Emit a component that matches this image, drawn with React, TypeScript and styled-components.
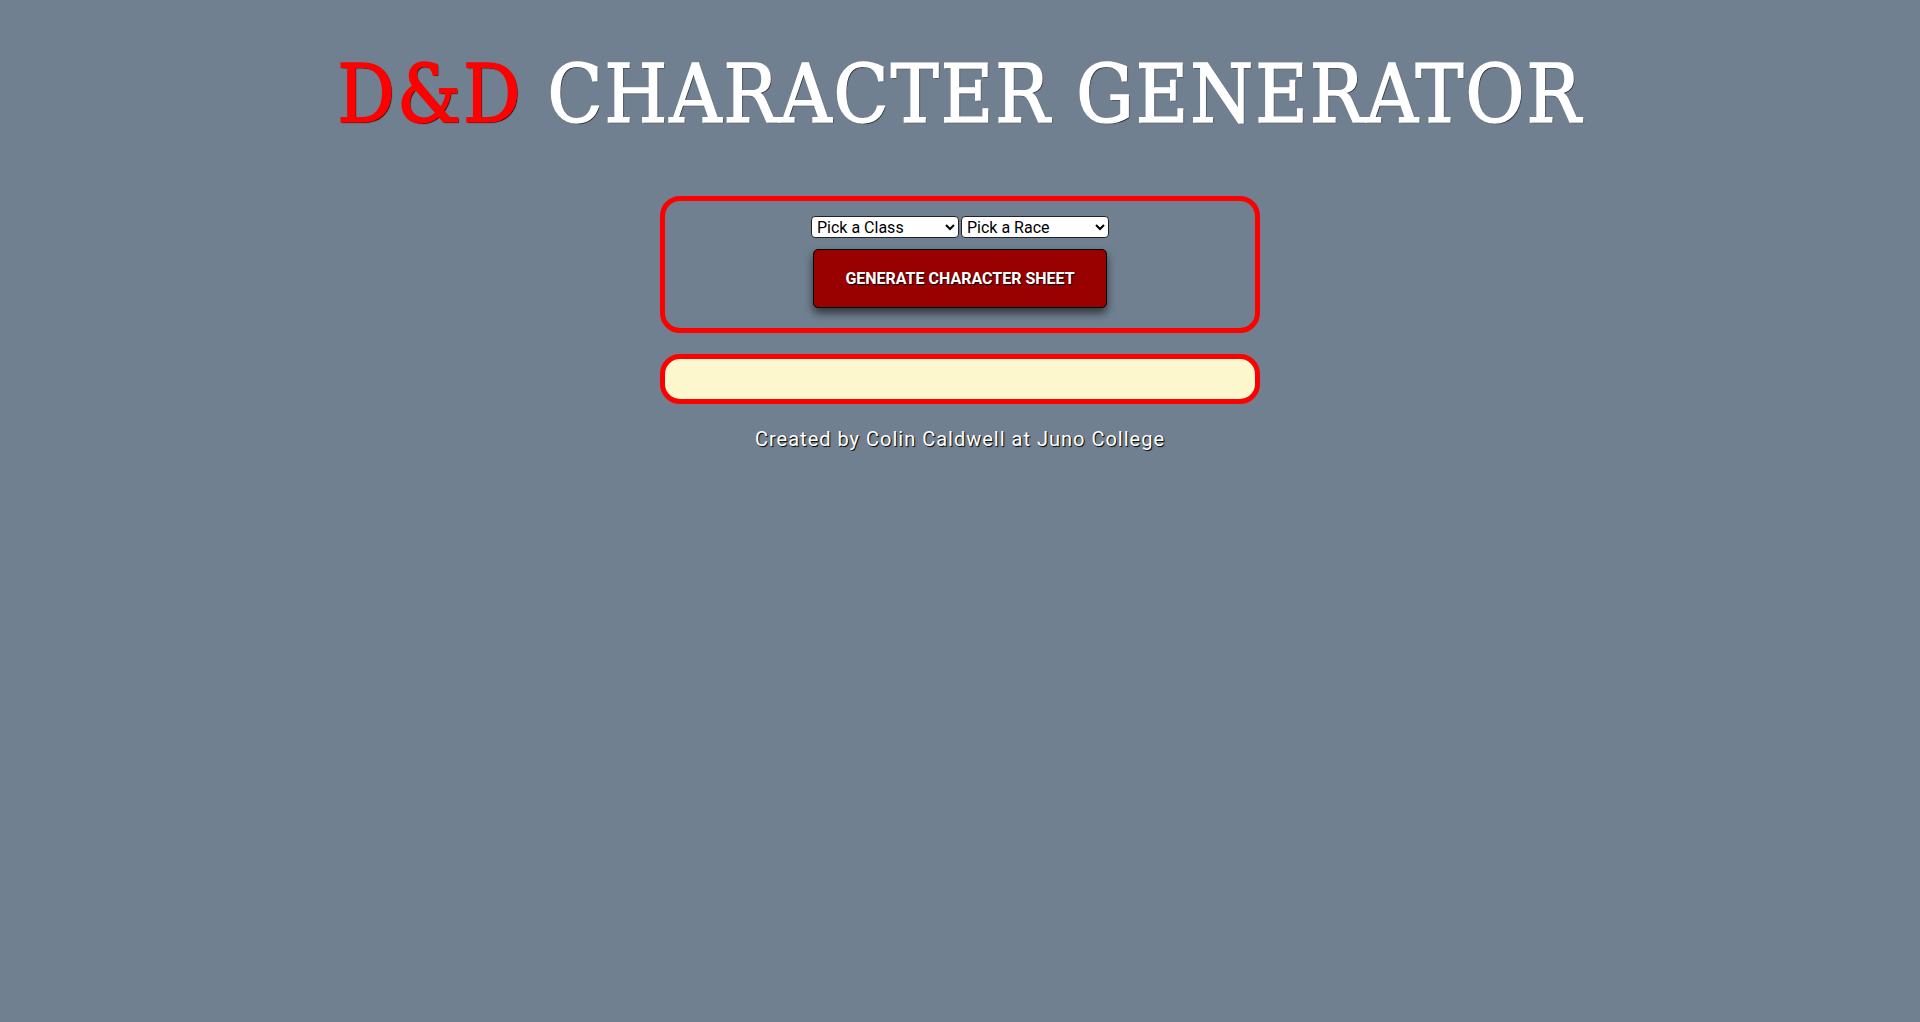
import React, { useState } from "react";
import styled, { createGlobalStyle } from "styled-components";

const GlobalStyle = createGlobalStyle`
  body {
    margin: 0;
    background: #708090;
    font-family: Roboto, "Liberation Sans", sans-serif;
  }
`;

const Page = styled.main`
  display: flex;
  flex-direction: column;
  align-items: center;
  padding-top: 46px;
`;

const Title = styled.h1`
  margin: 0 0 52px;
  font-family: "DejaVu Serif", "Liberation Serif", serif;
  font-stretch: condensed;
  font-size: 80px;
  line-height: 98px;
  font-weight: 400;
  letter-spacing: 2px;
  color: #fff;
  -webkit-text-stroke: 1.5px;
  text-shadow: 1px 1px 1px #000;
  white-space: nowrap;
`;

const Red = styled.span`
  color: #ff0000;
`;

const Panel = styled.section<{ $light?: boolean }>`
  box-sizing: border-box;
  width: 600px;
  border: 5px solid #ff0000;
  border-radius: 20px;
  background: ${(p) => (p.$light ? "#fdf7cd" : "transparent")};
  min-height: ${(p) => (p.$light ? "50px" : "auto")};
  margin-bottom: 21px;
`;

const Form = styled.form`
  display: flex;
  flex-direction: column;
  align-items: center;
  gap: 11px;
  padding: 15px 0 20px;
`;

const SelectRow = styled.div`
  display: flex;
  gap: 2px;
`;

const Select = styled.select`
  width: 148px;
  height: 22px;
  box-sizing: border-box;
  border: 1px solid #222;
  border-radius: 4px;
  background: #fff;
  font-family: Roboto, sans-serif;
  font-size: 16px;
  color: #000;
  padding: 0 1px;
`;

const Button = styled.button`
  width: 294px;
  height: 59px;
  border: 1px solid #000;
  border-radius: 5px;
  background: #990000;
  color: #fff;
  font-family: Roboto, sans-serif;
  font-weight: 700;
  font-size: 16px;
  text-transform: uppercase;
  text-shadow: 1px 1px 1px #000;
  box-shadow: 0 5px 8px rgba(0, 0, 0, 0.6);
  cursor: pointer;
`;

const Footer = styled.p`
  margin: 2px 0 0;
  font-size: 20px;
  letter-spacing: 1px;
  color: #fff;
  text-shadow: 1px 1px 1px #000;
`;

const classes = ["Barbarian", "Bard", "Cleric", "Druid", "Fighter", "Monk", "Paladin", "Ranger", "Rogue", "Sorcerer", "Warlock", "Wizard"];
const races = ["Dragonborn", "Dwarf", "Elf", "Gnome", "Half-Elf", "Half-Orc", "Halfling", "Human", "Tiefling"];

export default function App() {
  const [charClass, setCharClass] = useState("");
  const [race, setRace] = useState("");

  return (
    <>
      <GlobalStyle />
      <Page>
        <Title>
          <Red>D&amp;D</Red> CHARACTER GENERATOR
        </Title>
        <Panel>
          <Form onSubmit={(e) => e.preventDefault()}>
            <SelectRow>
              <Select value={charClass} onChange={(e) => setCharClass(e.target.value)}>
                <option value="">Pick a Class</option>
                {classes.map((c) => (
                  <option key={c} value={c}>{c}</option>
                ))}
              </Select>
              <Select value={race} onChange={(e) => setRace(e.target.value)}>
                <option value="">Pick a Race</option>
                {races.map((r) => (
                  <option key={r} value={r}>{r}</option>
                ))}
              </Select>
            </SelectRow>
            <Button type="submit">Generate Character Sheet</Button>
          </Form>
        </Panel>
        <Panel $light />
        <Footer>Created by Colin Caldwell at Juno College</Footer>
      </Page>
    </>
  );
}
